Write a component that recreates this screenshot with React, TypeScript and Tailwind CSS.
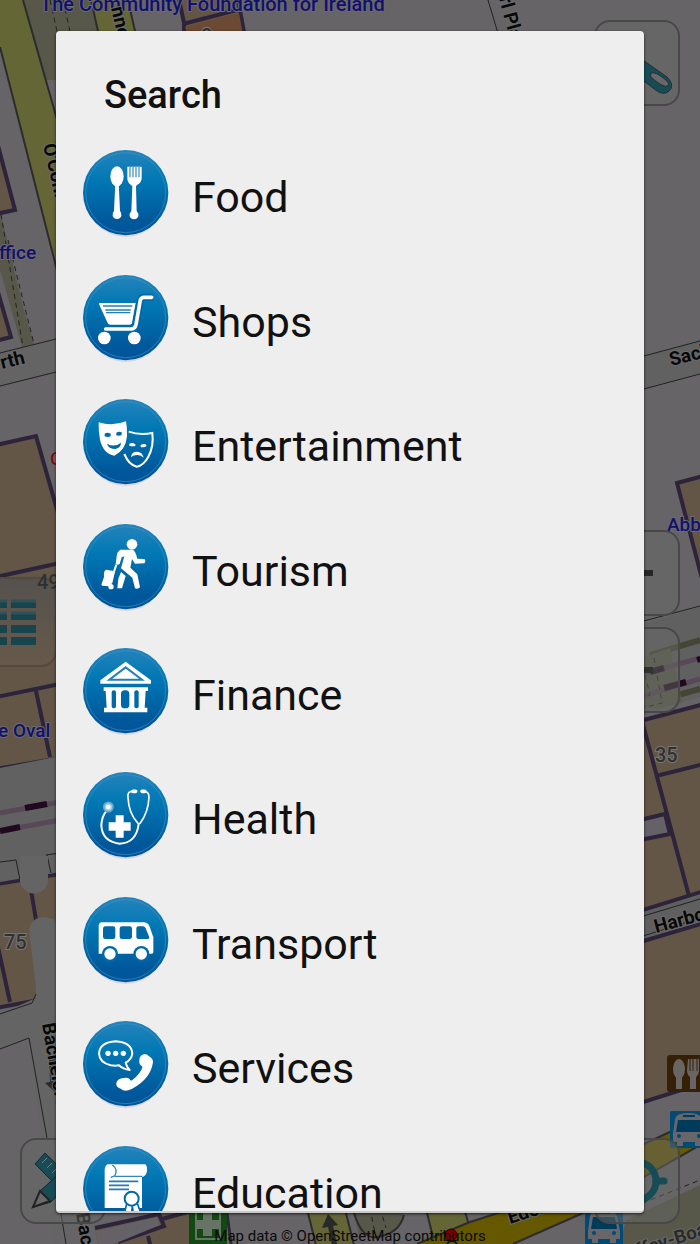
import React from 'react';

const BLUE = '#0069a8';

const FoodIcon = () => (
  <g fill="#fff">
    <ellipse cx="102" cy="79" rx="20" ry="30" />
    <path d="M97 98h10l4 84q6 8 4 16a14 14 0 0 1-26 0q-2-8 4-16z" />
    <path d="M133 50h43v34q0 14-13 20l-4 5 2 74q7 8 5 16a14 14 0 0 1-26 0q-2-8 5-16l3-74-5-5q-10-6-10-20z" />
    <path d="M141 50v32M150 50v32M159 50v32M168 50v32" stroke="#4a96c3" strokeWidth="4" />
  </g>
);

const ShopsIcon = () => (
  <g>
    <path d="M49 84h109l-11 61q-2 4-6 4H82q-6 0-8-5L48 88z" fill="#fff" />
    <path d="M60 93h88M67 105h76M69 113h73" stroke="#2380b7" strokeWidth="4" />
    <path d="M211 67h-28q-8 0-11 8l-13 72q-3 14-15 14H64" fill="none" stroke={BLUE} strokeWidth="22" />
    <path d="M206 67h-23q-8 0-11 8l-13 74q-3 13-15 13H68" fill="none" stroke="#fff" strokeWidth="11" strokeLinecap="round" />
    <circle cx="64" cy="189" r="19" fill="#fff" />
    <circle cx="154" cy="189" r="19" fill="#fff" />
  </g>
);

const MasksIcon = () => (
  <g>
    <path d="M137 98q32 11 71 4 5 40-12 71-14 26-35 30-24-6-37-38" fill="none" stroke="#fff" strokeWidth="6" />
    <path d="M47 70q42 13 82-3 4 20 3 45-4 42-38 58-33-6-43-48-5-26-4-52z" fill="#fff" />
    <path d="M65 104q8-5 18 0v8q-9 4-18 0zM100 101q8-5 16-1v8q-8 4-16 1z" fill={BLUE} />
    <path d="M72 134q22 13 42-3 0 14-16 19-22 0-26-16z" fill={BLUE} />
    <path d="M139 134q9-5 18 2v5q-9 2-18-1zM173 138q9-6 17-1v5q-7 4-17 2z" fill="#fff" />
    <path d="M144 174q2-16 18-16t20 18q-9-9-20-8-10 0-18 6z" fill="#fff" />
  </g>
);

const TourismIcon = () => (
  <g fill="none" stroke="#fff" strokeLinejoin="round">
    <circle cx="147" cy="61" r="16" fill="#fff" stroke="none" />
    <path d="M112 77h37q9 4 14 27l21 1q6 6 0 13l-28 1-9-14-5 26 21 20 8 39q-6 6-15 3l-8-32-34-28 10-36-8 3-6 20q-7 5-12-1l4-29q2-7 10-13z" fill="#fff" stroke="none" />
    <path d="M114 144l14 12-11 37h-14l3-29z" fill="#fff" stroke="none" />
    <path d="M69 137l23 4q5 2 3 7l-7 29-11 10-19-2q-4-1-2-6l7-20q-2-18 6-22z" fill="#fff" stroke="none" />
    <path d="M100 122l-8 24" strokeWidth="6" />
    <circle cx="84" cy="188" r="8" fill="#fff" stroke="none" />
  </g>
);

const FinanceIcon = () => (
  <g>
    <path d="M128 41l76 56v10H52V97z" fill="#fff" />
    <path d="M128 58l49 37H79z" fill="#fff" stroke="#2380b7" strokeWidth="6" />
    <path d="M62 118h133v11h-7l-3 50h8v14H63v-14h8l-3-50h-6z" fill="#fff" />
    <rect x="86" y="127" width="13" height="54" rx="6" fill={BLUE} />
    <rect x="114" y="127" width="25" height="54" rx="11" fill={BLUE} />
    <rect x="154" y="127" width="13" height="54" rx="6" fill={BLUE} />
  </g>
);

const HealthIcon = () => (
  <g fill="none" stroke="#fff">
    <path d="M156 59l-14 0q-9 3-7 17 2 48 29 77 4 4 8 0 24-32 26-77 0-14-9-17h-12" strokeWidth="5" />
    <path d="M150 58h8M177 58h8" strokeWidth="11" strokeLinecap="round" />
    <path d="M167 156q-7 57-57 59-53-6-55-55 1-28 17-45" strokeWidth="6" />
    <circle cx="76" cy="105" r="14" fill="#a5cee5" strokeWidth="5" stroke="#64a9d0" />
    <circle cx="76" cy="105" r="7" fill="#fff" stroke="none" />
    <path d="M98 130h24v21h21v25h-21v21H98v-21H77v-25h21z" fill="#fff" stroke="none" />
  </g>
);

const BusIcon = () => (
  <g>
    <path d="M56 76h128q11 1 16 13l11 32v44q0 5-5 5H47V86q1-9 9-10z" fill="#fff" />
    <g fill={BLUE}>
      <rect x="60" y="88" width="37" height="38" rx="7" />
      <rect x="110" y="88" width="37" height="38" rx="7" />
      <path d="M166 88h14q6 0 8 6l11 27q1 5-5 5h-28q-6 0-6-6V94q0-6 6-6z" />
      <circle cx="81" cy="171" r="24" />
      <circle cx="175" cy="171" r="24" />
    </g>
    <circle cx="81" cy="171" r="17" fill="#fff" />
    <circle cx="175" cy="171" r="17" fill="#fff" />
  </g>
);

const ServicesIcon = () => (
  <g>
    <path d="M108 133q-11 2-25 0-34-8-35-36 3-33 50-36 47 3 50 36-2 18-20 28 2 12 12 22-19-2-32-14z" fill="none" stroke="#fff" strokeWidth="6" strokeLinejoin="round" />
    <g fill="#fff">
      <circle cx="75" cy="97" r="8" />
      <circle cx="98" cy="97" r="8" />
      <circle cx="121" cy="97" r="8" />
      <path d="M179 101q9-5 19 5 13 7 12 18-4 30-26 52-22 22-48 32-14 4-23-5-15-4-13-17 3-14 22-15 17-4 20 7 2 2 6-1 21-16 30-37 1-4-2-5-9-6-7-18 0-12 10-16z" />
    </g>
  </g>
);

const EducationIcon = () => (
  <g>
    <path d="M73 55h114q8 8 4 25-3 9-10 12h-4v94H65V70q0-10 8-15z" fill="#fff" />
    <path d="M88 57q18 13 7 33l-12 4M96 91h82" fill="none" stroke="#3288b9" strokeWidth="4" />
    <path d="M78 106h88M78 118h60M78 130h60" stroke="#2b78ac" strokeWidth="5" />
    <path d="M131 174l-8 32 15-3 6 10 4-32 5 32 8-10 14 3-12-34z" fill="#fff" stroke={BLUE} strokeWidth="5" />
    <circle cx="146" cy="158" r="21" fill="#fff" stroke={BLUE} strokeWidth="6" />
  </g>
);

const categories = [
  { name: 'Food', Icon: FoodIcon },
  { name: 'Shops', Icon: ShopsIcon },
  { name: 'Entertainment', Icon: MasksIcon },
  { name: 'Tourism', Icon: TourismIcon },
  { name: 'Finance', Icon: FinanceIcon },
  { name: 'Health', Icon: HealthIcon },
  { name: 'Transport', Icon: BusIcon },
  { name: 'Services', Icon: ServicesIcon },
  { name: 'Education', Icon: EducationIcon },
];

const BusStop = ({ x, y }: { x: number; y: number }) => (
  <g transform={`translate(${x} ${y})`}>
    <rect width="38" height="37" rx="2" fill="#004b73" />
    <path d="M5 8q1-6 13-6t14 6l3 15v8h-4v4h-6v-4H13v4H7v-4H3v-8z" fill="#686668" />
    <path d="M8 9h22l2 12H6z" fill="#003b5c" />
    <path d="M13 5h12" stroke="#003b5c" strokeWidth="2" />
    <circle cx="9" cy="25" r="2" fill="#004b73" />
    <circle cx="29" cy="25" r="2" fill="#004b73" />
  </g>
);

const MapView = () => (
  <svg
    className="absolute inset-0 h-full w-full font-[Roboto,sans-serif]"
    viewBox="0 0 700 1244"
    preserveAspectRatio="xMidYMid slice"
    aria-label="Map"
  >
    <rect width="700" height="1244" fill="#676467" />

    {/* streets, top left */}
    <path d="M23 0h68l20 80H46z" fill="#575849" />
    <path d="M0 0h23l37 130v153L0 47z" fill="#656636" />
    <path d="M91 0h37l9 40h-37z" fill="#656636" />
    <path d="M23 0l37 130M0 47l60 235M91 0l9 40M128 0l9 40" stroke="#2c2c2e" strokeWidth="2" fill="none" />
    <path d="M50 0l9 40M63 0l9 40" stroke="#222" strokeDasharray="5 4" />
    <path d="M488 0l12 40" stroke="#222" />

    {/* streets, left */}
    <path d="M0 210l23 97 11 37-12 3L0 270z" fill="#57584a" />
    <path d="M1 214l22 133M8 240l26 104" stroke="#222" strokeDasharray="5 4" />
    <path d="M0 355l60-16v34L0 386z" fill="#646464" />
    <path d="M0 353l60-15M0 386l60-15" stroke="#222" />

    {/* buildings, left */}
    <g fill="#635647" stroke="#2d243b" strokeWidth="4">
      <path d="M-4 138l19 72-19 4z" />
      <path d="M-4 285l15 52-15 4z" />
      <path d="M-4 445l40-9 30 105v216l-70 12z" />
      <path d="M-4 577l64-14M-4 697l64-13M36 691l14 66" />
      <path d="M178-6l6 29v20h62l-9-49z" />
      <path d="M183 24l54-14" />
      <path d="M-4 884l64-10v122l-64 12z" />
      <path d="M30 884l10 60M-4 938l14 64" />
    </g>
    <path d="M185 27l54-14 4 22h-55z" fill="#6b4932" />

    {/* railway and quay, left */}
    <path d="M0 768l60-12v116l-60 10z" fill="#616161" />
    <path d="M0 813l60-11M0 831l60-11" stroke="#594858" strokeWidth="5" />
    <path d="M25 808l22-4M0 831l20-4" stroke="#20081e" strokeWidth="6" />
    <path d="M0 862l16-2 4 20M46 855l14-2M47 855l4 18" stroke="#222" fill="none" />
    <path d="M20 856h28v22a14 14 0 0 1-28 3z" fill="#646464" />
    <path d="M29 930q2-12 14-13 13 0 17 10v317L0 1244v-230l36-16v-10z" fill="#646464" />
    <path d="M0 1049l29-11 25 206H0z" fill="#676467" />
    <path d="M0 1049l29-11 18 100M0 1014l32-11 4-9M60 1208l6 36" stroke="#222" fill="none" />
    <path d="M49 1060l7-1 1 22h6l-8 11-10-9 5-1z" fill="#29292a" />

    {/* streets and buildings, right */}
    <path d="M640 357l60-17v34l-60 16z" fill="#616161" />
    <path d="M640 357l60-16M640 390l60-16M640 622l60-16" stroke="#222" />
    <path d="M640 625l60-18v90l-60 18z" fill="#606060" />
    <path d="M650 655l50-15M650 703l50-14" stroke="#454536" strokeWidth="6" />
    <path d="M650 655l20-7 12 54-24 7-18-2v-50z" fill="#5b5c49" />
    <path d="M640 675l60-17M640 697l60-18" stroke="#594858" strokeWidth="5" />
    <path d="M650 672l14-4M664 688l22-6M697 660l10-3" stroke="#20081e" strokeWidth="6" />
    <path d="M654 658l8 45-20 5M645 675l5 20-9 3" stroke="#222" strokeDasharray="5 4" fill="none" />
    <g fill="#635647" stroke="#2d243b" strokeWidth="4">
      <path d="M677 483l30-8v123z" />
      <path d="M640 721l64-17v187l-64 20z" />
      <path d="M640 942l64-19v160l-64 20z" />
      <path d="M642 721l47 175M656 776l48-12" fill="none" />
      <path d="M640 820l25-6 5 20-30 6z" fill="#656267" />
    </g>
    <path d="M640 913l64-19v27l-64 18z" fill="#5f5f5f" />
    <path d="M640 917l60-18M640 937l60-19" stroke="#222" />

    {/* streets and buildings, bottom */}
    <path d="M95 1229l65-14 60-12v50H100z" fill="#635647" />
    <path d="M95 1228l64-14 5 12-46 16M148 1236l4 16M162 1219l66-18" stroke="#2d243b" strokeWidth="4" fill="none" />
    <path d="M96 1231l61-14 3 8-46 19h-16z" fill="#656267" />
    <path d="M306 1205h38l10 40h-38zM425 1205h38l8 40h-38z" fill="#656636" />
    <path d="M352 1205h50q6 22-18 30h-25z" fill="#575849" />
    <path d="M306 1205l10 40M344 1205l10 40M425 1205l10 40M463 1205l6 20M352 1205q8 35 25 32 22-3 27-22" stroke="#2c2c2e" strokeWidth="2" fill="none" />
    <path d="M370 1208l6 30M380 1208l6 20" stroke="#222" strokeDasharray="5 4" />
    <path d="M328 1214l10 11-5 1 4 18-5 1-4-18-6 1z" fill="#29292a" />
    <path d="M417 1244l53-22 50-16 124-62 56-26v27l-56 32-61 36-70 31z" fill="#665800" />
    <path d="M417 1244l53-22 50-16 124-62 56-26M513 1244l70-31 61-36 56-32" stroke="#2c2c2e" strokeWidth="2" fill="none" />
    <path d="M626 1220l74-35v59h-80z" fill="#575849" />
    <path d="M626 1210l74-30" stroke="#222" strokeDasharray="5 4" />
    <path d="M226 1205l5 39" stroke="#2d243b" strokeWidth="3" />

    {/* points of interest */}
    <rect x="189" y="1207" width="38" height="40" rx="2" fill="#124912" />
    <path d="M196 1208v31h24v-31" stroke="#687368" strokeWidth="2" fill="none" />
    <path d="M203 1213h9v7h7v9h-7v7h-9v-7h-6v-9h6z" fill="#687368" />
    <rect x="667" y="1055" width="40" height="37" rx="3" fill="#352007" />
    <ellipse cx="679" cy="1069" rx="6" ry="10" fill="#686562" />
    <path d="M676 1073h6v16h-6z" fill="#686562" />
    <path d="M688 1059h11v11q0 5-3 7v12h-6v-12q-3-2-3-7z" fill="#686562" />
    <path d="M690 1058v13M693 1058v13M697 1058v13" stroke="#352007" />
    <BusStop x={670} y={1111} />
    <BusStop x={585} y={1208} />
    <circle cx="451" cy="1235" r="6" fill="#7a0000" stroke="#2a0000" />
    <circle cx="452" cy="1246" r="5" fill="#656600" stroke="#111" strokeWidth="2" />

    <g fontSize="19" fontWeight="500" fill="#11116d" stroke="#6c6970" strokeWidth="2" paintOrder="stroke">
      <text x="40" y="11" fontSize="20">The Community Foundation for Ireland</text>
      <text x="-1" y="259">ffice</text>
      <text x="-2" y="737">e Oval</text>
      <text x="667" y="531">Abbey</text>
      <text x="50" y="465" fill="#820b0b">C</text>
    </g>
    <g fontSize="20" fontWeight="500" fill="#303030" stroke="#777" strokeWidth="2" paintOrder="stroke">
      <text x="4" y="949">75</text>
      <text x="655" y="762">35</text>
      <text x="201" y="43">8r</text>
    </g>
    <g fontSize="19" fontWeight="700" fill="#080808" stroke="#6b6b6b" strokeWidth="2" paintOrder="stroke">
      <text transform="translate(111 8) rotate(77)">nnell</text>
      <text transform="translate(499 -2) rotate(75)">rl Place</text>
      <text transform="translate(43 145) rotate(77)">O'Connell</text>
      <text transform="translate(2 369) rotate(-14)">rth</text>
      <text transform="translate(671 366) rotate(-14)">Sackville</text>
      <text transform="translate(656 933) rotate(-15)">Harbour</text>
      <text transform="translate(42 1024) rotate(80)">Bachelors</text>
      <text transform="translate(76 1214) rotate(80)">Bachelors</text>
      <text transform="translate(510 1224) rotate(-18)">Eden Quay</text>
      <text transform="translate(638 1257) rotate(-18)" fill="#2a2a2a">ffey-Boardwalk</text>
    </g>
    <text x="350" y="1241" textAnchor="middle" fontSize="15" fill="#0a0a0a">
      Map data © OpenStreetMap contributors
    </text>
  </svg>
);

const mapButton =
  'absolute h-[86px] w-[86px] rounded-2xl border-2 border-[#484848] bg-[#666866]/50 overflow-hidden';

const MapControls = () => (
  <div className="absolute inset-0">
    <button className={`${mapButton} right-5 top-5`} aria-label="Find">
      <svg viewBox="0 0 82 82" className="h-full w-full">
        <path d="M44 36l27 19q9 9 1 15-5 3-11-1L40 53z" fill="#174c57" stroke="#252f32" />
        <path d="M55 51q4-2 15 7 4 4 2 6-4 2-15-7-4-3-2-6z" fill="#686868" stroke="#252f32" />
      </svg>
    </button>
    <button className={`${mapButton} right-5 top-[530px]`} aria-label="Zoom out">
      <svg viewBox="0 0 82 82" className="h-full w-full">
        <path d="M28 41h29" stroke="#262626" strokeWidth="6" />
      </svg>
    </button>
    <button className={`${mapButton} right-5 top-[627px]`} aria-label="Zoom in">
      <svg viewBox="0 0 82 82" className="h-full w-full">
        <path d="M28 41h29M41 28v27" stroke="#323331" strokeWidth="6" />
      </svg>
    </button>
    <button className="absolute -left-8 top-[577px] h-[90px] w-[89px] rounded-2xl border-2 border-[#54493e] bg-linear-to-b from-[#55524e] to-[#67594a]" aria-label="Menu">
      <svg viewBox="0 0 85 86" className="h-full w-full overflow-visible">
        <path d="M26 25h11M26 37h11M26 50h11M26 62h11M41 25h25M41 37h25M41 50h25M41 62h25" stroke="#18454d" strokeWidth="8" />
        <path d="M26 22h11M41 22h25M26 34h11M41 34h25" stroke="#315058" strokeWidth="3" />
        <text x="67" y="10" fontSize="20" fontWeight="500" fill="#303030" fontFamily="Roboto">49</text>
      </svg>
    </button>
    <button className={`${mapButton} bottom-5 left-5`} aria-label="Edit map">
      <svg viewBox="0 0 82 82" className="h-full w-full">
        <path d="M13 24l10-11 45 44-11 11z" fill="#174c57" stroke="#18272a" />
        <path d="M20 23l5-5M25 28l5-5M30 33l5-5M35 38l5-5" stroke="#718083" />
        <path d="M57 16l9 8-37 38-17 5 6-16z" fill="#174c57" stroke="#18272a" />
        <path d="M18 51l10 10-17 6z" fill="#67696a" stroke="#222" strokeWidth="2" />
      </svg>
    </button>
    <button className={`${mapButton} bottom-5 right-5`} aria-label="My location">
      <svg viewBox="0 0 82 82" className="h-full w-full">
        <circle cx="41" cy="41" r="19" fill="none" stroke="#174c57" strokeWidth="7" />
        <path d="M60 41h8M41 60v8M41 22v-8" stroke="#174c57" strokeWidth="7" strokeLinecap="round" />
      </svg>
    </button>
  </div>
);

const SearchDialog = () => (
  <div
    role="dialog"
    aria-labelledby="search-title"
    className="relative w-full overflow-hidden rounded-[4px] border-b-2 border-[#c9c9c9] bg-[#eeeeee] shadow-[0_1px_3px_rgba(0,0,0,0.7)]"
  >
    <h1 id="search-title" className="h-[100px] px-12 pt-10 text-[38px] leading-[48px] font-medium text-[#111]">
      Search
    </h1>
    <ul className="grid h-[1120px] grid-rows-9">
      {categories.map(({ name, Icon }) => (
        <li key={name} className="flex">
          <button className="flex w-full items-center gap-[22px] px-[26px] text-left">
            <svg viewBox="-3 -3 264 264" className="h-22 w-22 shrink-0 overflow-visible" aria-hidden="true">
              <ellipse cx="128" cy="133" rx="122" ry="128" fill="#b9bfe0" opacity="0.5" />
              <circle cx="128" cy="128" r="128" fill="url(#disc)" />
              <circle cx="128" cy="128" r="120" fill="none" stroke="#4296c4" strokeWidth="3" opacity="0.6" />
              <Icon />
            </svg>
            <span className="pt-2 text-[43px] leading-[50px] text-[#111]">{name}</span>
          </button>
        </li>
      ))}
    </ul>
  </div>
);

const App = () => {
  return (
    <div className="relative flex h-screen overflow-hidden bg-[#676467] px-14 pt-[31px] pb-[31px] font-[Roboto,sans-serif]">
      <svg className="absolute h-0 w-0" aria-hidden="true">
        <defs>
          <linearGradient id="disc" x1="0" y1="0" x2="0" y2="1">
            <stop offset="0" stopColor="#2683bb" />
            <stop offset="0.35" stopColor="#0078b4" />
            <stop offset="0.85" stopColor="#00579a" />
            <stop offset="1" stopColor="#00559a" />
          </linearGradient>
        </defs>
      </svg>
      <MapView />
      <MapControls />
      <SearchDialog />
    </div>
  );
};

export default App;
